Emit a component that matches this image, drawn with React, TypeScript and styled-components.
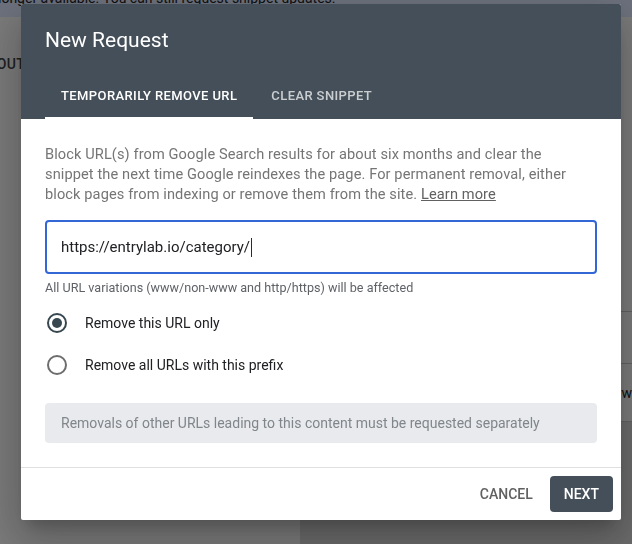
import React from "react";
import styled, { createGlobalStyle } from "styled-components";

const GlobalStyle = createGlobalStyle`
  * { box-sizing: border-box; }
  html, body { margin: 0; padding: 0; }
  body {
    font-family: Roboto, "Noto Sans", Arial, sans-serif;
    background: #f5f5f5;
    overflow: hidden;
  }
`;

/* ---------- page behind the dialog ---------- */

const Page = styled.div`
  width: 632px;
  height: 544px;
  display: flex;
  flex-direction: column;
  background: #f5f5f5;
  overflow: hidden;
`;

const Banner = styled.div`
  height: 17px;
  flex-shrink: 0;
  background: #dae3fa;
  overflow: hidden;
  white-space: nowrap;
`;

const BannerText = styled.div`
  font-size: 14px;
  line-height: 16px;
  color: #202124;
  margin-top: -10px;
  margin-left: -2px;
`;

const PageBody = styled.div`
  flex: 1;
  display: flex;
  flex-direction: column;
`;

const PageTab = styled.div`
  margin-top: 38px;
  margin-left: -22px;
  font-size: 14px;
  font-weight: 500;
  letter-spacing: 0.3px;
  color: #3c4043;
  line-height: 18px;
`;

const Table = styled.div`
  margin-top: 238px;
  margin-left: 300px;
  flex: 1;
  display: flex;
  flex-direction: column;
  border-top: 1px solid #c4c4c4;
`;

const TableRow = styled.div<{ h: number }>`
  height: ${(p) => p.h}px;
  border-bottom: 1px solid #c4c4c4;
  display: flex;
  align-items: center;
  justify-content: flex-end;
  font-size: 14px;
  color: #202124;
  white-space: nowrap;
  overflow: hidden;
`;

const TableFoot = styled.div`
  flex: 1;
  background: #d6d6d6;
`;

const Backdrop = styled.div`
  position: fixed;
  inset: 0;
  background: rgba(0, 0, 0, 0.5);
`;

/* ---------- dialog ---------- */

const Dialog = styled.div`
  position: fixed;
  top: 4px;
  left: 21px;
  width: 600px;
  height: 516px;
  background: #ffffff;
  border-radius: 2px;
  display: flex;
  flex-direction: column;
  overflow: hidden;
  box-shadow: 0 11px 15px -7px rgba(0, 0, 0, 0.2),
    0 24px 38px 3px rgba(0, 0, 0, 0.14), 0 9px 46px 8px rgba(0, 0, 0, 0.12);
`;

const Header = styled.div`
  background: #444f59;
  padding: 22px 24px 0;
  display: flex;
  flex-direction: column;
`;

const Title = styled.h2`
  margin: 0;
  font-size: 21px;
  line-height: 28px;
  font-weight: 400;
  color: #ffffff;
`;

const Tabs = styled.div`
  display: flex;
  margin-top: 17px;
`;

const Tab = styled.div<{ active?: boolean }>`
  height: 48px;
  padding: 2px 16px 0 ${(p) => (p.active ? 16 : 18)}px;
  display: flex;
  align-items: center;
  font-size: 13px;
  font-weight: 500;
  letter-spacing: 0.4px;
  text-transform: uppercase;
  color: ${(p) => (p.active ? "#ffffff" : "rgba(255,255,255,0.72)")};
  border-bottom: 2px solid ${(p) => (p.active ? "#ffffff" : "transparent")};
`;

const Body = styled.div`
  flex: 1;
  padding: 25px 24px 24px;
  display: flex;
  flex-direction: column;
`;

const Description = styled.p`
  margin: 0;
  max-width: 540px;
  font-size: 14.6px;
  line-height: 20px;
  letter-spacing: 0.1px;
  color: #757575;
`;

const LearnMore = styled.a`
  color: #616161;
  text-decoration: underline;
`;

const UrlField = styled.div`
  margin-top: 16px;
  height: 54px;
  border: 2px solid #3367d6;
  border-radius: 4px;
  padding: 0 14px;
  display: flex;
  align-items: center;
  font-size: 15px;
  color: #202124;
`;

const Caret = styled.span`
  display: inline-block;
  width: 1px;
  height: 19px;
  margin-left: 1px;
  background: #1a237e;
`;

const Helper = styled.div`
  margin-top: 6px;
  font-size: 12.6px;
  line-height: 16px;
  color: #5f6368;
`;

const RadioGroup = styled.div`
  margin-top: 6px;
  display: flex;
  flex-direction: column;
`;

const RadioRow = styled.label`
  height: 42px;
  display: flex;
  align-items: center;
  gap: 18px;
  padding-left: 2px;
  font-size: 14px;
  color: #202124;
`;

const RadioCircle = styled.span<{ checked?: boolean }>`
  width: 20px;
  height: 20px;
  border-radius: 50%;
  border: 2px solid ${(p) => (p.checked ? "#37474f" : "#6d6d6d")};
  display: flex;
  align-items: center;
  justify-content: center;
  &::after {
    content: "";
    width: 10px;
    height: 10px;
    border-radius: 50%;
    background: #37474f;
    display: ${(p) => (p.checked ? "block" : "none")};
  }
`;

const Notice = styled.div`
  margin-top: 17px;
  height: 40px;
  background: #e8eaed;
  border-radius: 4px;
  padding: 0 16px;
  display: flex;
  align-items: center;
  font-size: 14px;
  color: #80868b;
`;

const Footer = styled.div`
  border-top: 1px solid #e0e0e0;
  padding: 8px;
  display: flex;
  justify-content: flex-end;
  align-items: center;
`;

const TextButton = styled.button`
  height: 36px;
  padding: 0 16px;
  border: none;
  background: transparent;
  font-family: inherit;
  font-size: 14px;
  font-weight: 500;
  letter-spacing: 0;
  color: #616161;
`;

const PrimaryButton = styled(TextButton)`
  padding: 0 14px;
  background: #444f59;
  color: #ffffff;
  border-radius: 4px;
  margin-left: 1px;
`;

export default function App() {
  return (
    <>
      <GlobalStyle />
      <Page>
        <Banner>
          <BannerText>
            longer available. You can still request snippet updates.
          </BannerText>
        </Banner>
        <PageBody>
          <PageTab>ABOUT</PageTab>
          <Table>
            <TableRow h={52} />
            <TableRow h={58}>https://www</TableRow>
            <TableFoot />
          </Table>
        </PageBody>
      </Page>
      <Backdrop />
      <Dialog>
        <Header>
          <Title>New Request</Title>
          <Tabs>
            <Tab active>Temporarily remove URL</Tab>
            <Tab>Clear snippet</Tab>
          </Tabs>
        </Header>
        <Body>
          <Description>
            Block URL(s) from Google Search results for about six months and
            clear the snippet the next time Google reindexes the page. For
            permanent removal, either block pages from indexing or remove them
            from the site. <LearnMore>Learn more</LearnMore>
          </Description>
          <UrlField>
            https://entrylab.io/category/
            <Caret />
          </UrlField>
          <Helper>
            All URL variations (www/non-www and http/https) will be affected
          </Helper>
          <RadioGroup>
            <RadioRow>
              <RadioCircle checked />
              Remove this URL only
            </RadioRow>
            <RadioRow>
              <RadioCircle />
              Remove all URLs with this prefix
            </RadioRow>
          </RadioGroup>
          <Notice>
            Removals of other URLs leading to this content must be requested
            separately
          </Notice>
        </Body>
        <Footer>
          <TextButton>CANCEL</TextButton>
          <PrimaryButton>NEXT</PrimaryButton>
        </Footer>
      </Dialog>
    </>
  );
}
